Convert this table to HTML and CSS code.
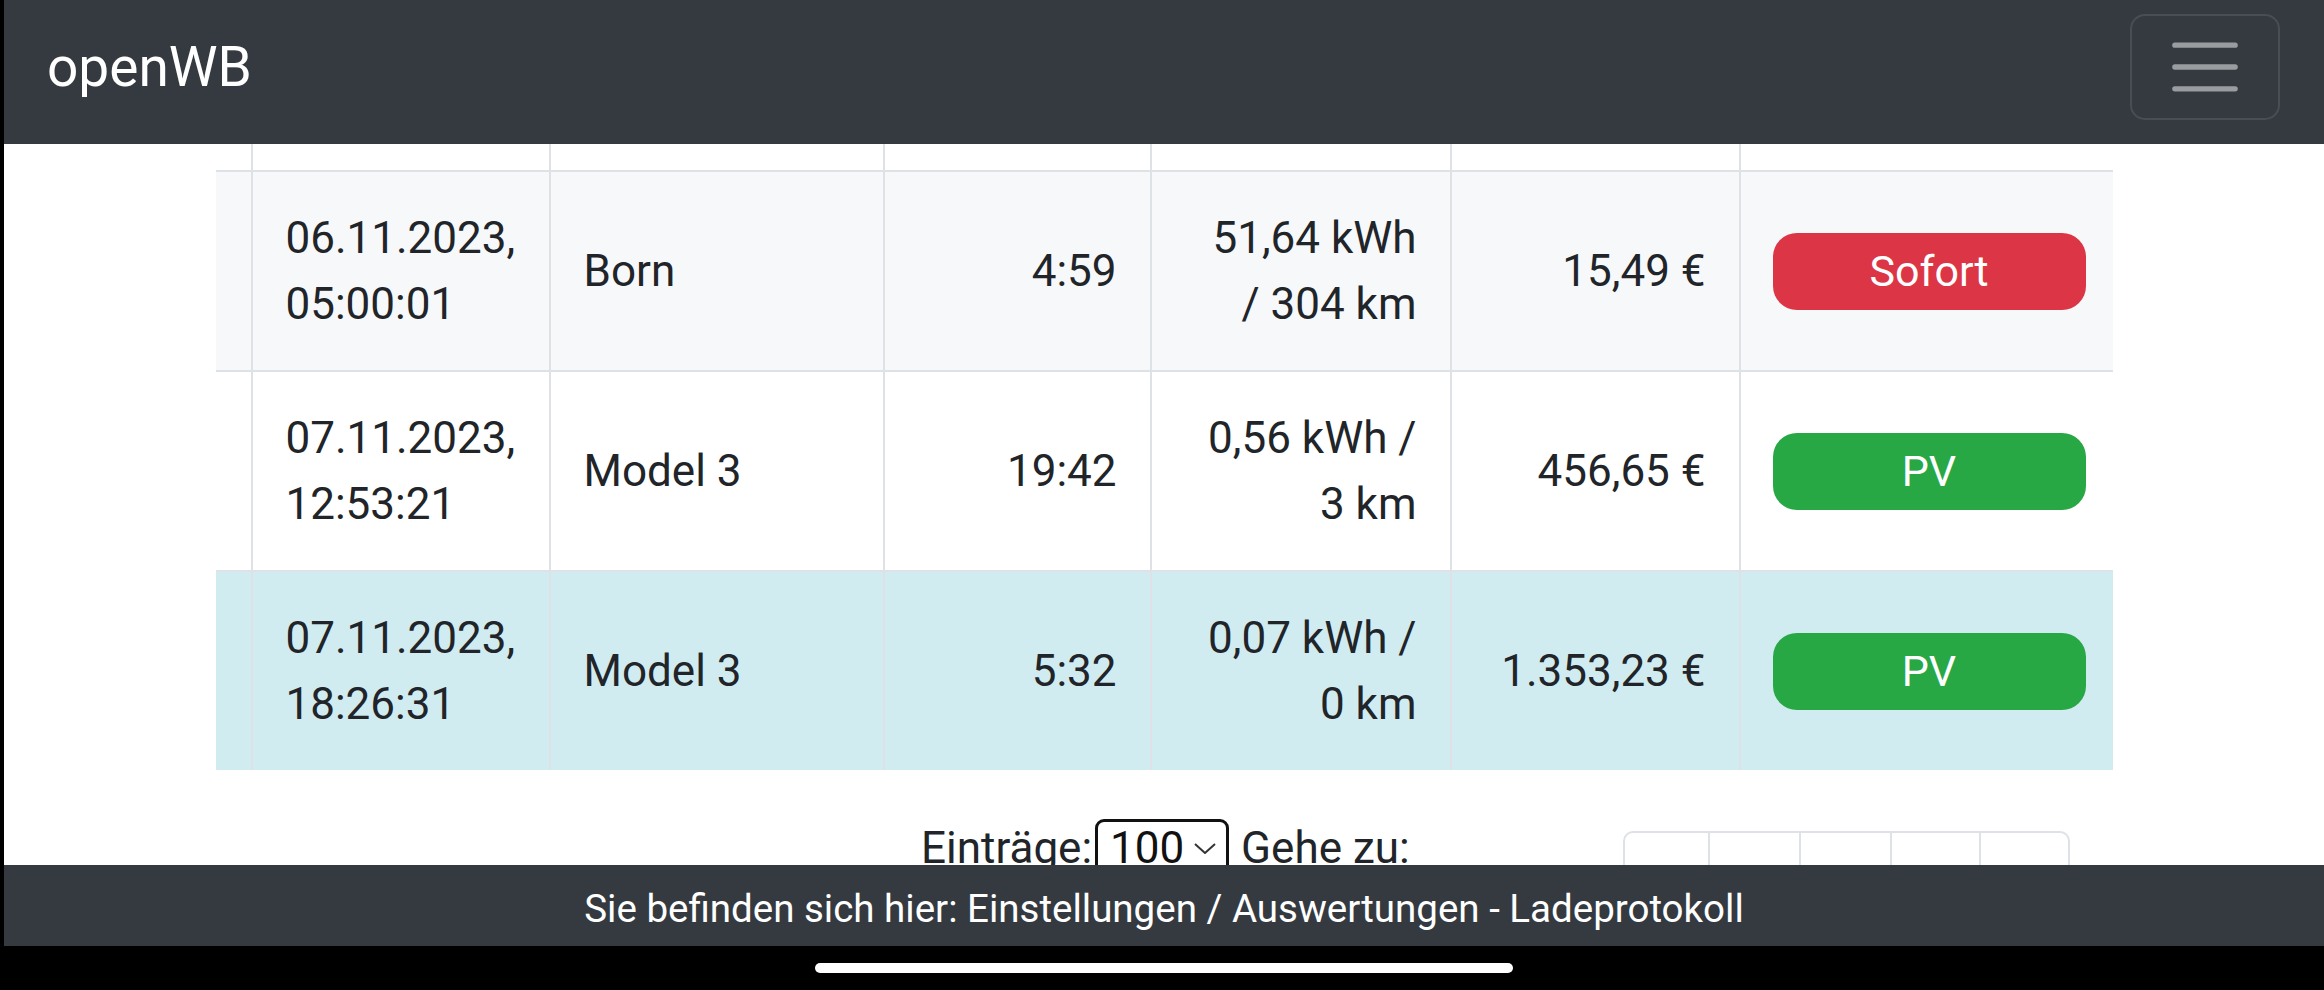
FILE: index.html
```html
<!DOCTYPE html>
<html lang="de">
<head>
<meta charset="utf-8">
<title>openWB - Ladeprotokoll</title>
<link rel="stylesheet" href="styles.css">
</head>
<body>
<div class="device">
  <header class="navbar">
    <span class="brand">openWB</span>
    <button class="toggler" type="button" aria-label="Menü">
      <svg class="toggler-icon" viewBox="0 0 30 30" width="82" height="82">
        <path d="M4 7h22M4 15h22M4 23h22" stroke="rgba(255,255,255,0.5)" stroke-width="2" stroke-linecap="round" fill="none"/>
      </svg>
    </button>
  </header>

  <main class="main">
    <div class="log-table">
      <div class="row row-partial">
        <div class="cell"></div>
        <div class="cell"></div>
        <div class="cell"></div>
        <div class="cell"></div>
        <div class="cell"></div>
        <div class="cell"></div>
        <div class="cell"></div>
      </div>
      <div class="row row-striped">
        <div class="cell"></div>
        <div class="cell">06.11.2023,<br>05:00:01</div>
        <div class="cell">Born</div>
        <div class="cell right">4:59</div>
        <div class="cell right">51,64 kWh<br>/ 304 km</div>
        <div class="cell right">15,49 €</div>
        <div class="cell badge-cell"><span class="badge badge-red">Sofort</span></div>
      </div>
      <div class="row">
        <div class="cell"></div>
        <div class="cell">07.11.2023,<br>12:53:21</div>
        <div class="cell">Model 3</div>
        <div class="cell right">19:42</div>
        <div class="cell right">0,56 kWh /<br>3 km</div>
        <div class="cell right">456,65 €</div>
        <div class="cell badge-cell"><span class="badge badge-green">PV</span></div>
      </div>
      <div class="row row-info">
        <div class="cell"></div>
        <div class="cell">07.11.2023,<br>18:26:31</div>
        <div class="cell">Model 3</div>
        <div class="cell right">5:32</div>
        <div class="cell right">0,07 kWh /<br>0 km</div>
        <div class="cell right">1.353,23 €</div>
        <div class="cell badge-cell"><span class="badge badge-green">PV</span></div>
      </div>
    </div>

    <div class="pager">
      <span class="pager-label">Einträge:</span>
      <span class="select">100<svg class="chevron" viewBox="0 0 22 11" width="22" height="11"><polyline points="1,1 11,10 21,1" fill="none" stroke="#333" stroke-width="2"/></svg></span>
      <span class="pager-label goto">Gehe zu:</span>
      <nav class="pagination" aria-label="Seiten">
        <span class="page p1"></span>
        <span class="page p2"></span>
        <span class="page p3"></span>
        <span class="page p4"></span>
        <span class="page p5"></span>
      </nav>
    </div>
  </main>

  <footer class="footer">Sie befinden sich hier: Einstellungen / Auswertungen - Ladeprotokoll</footer>

  <div class="homebar"><span class="home-indicator"></span></div>
</div>
</body>
</html>
```

FILE: styles.css
```css
* {
  box-sizing: border-box;
}

html, body {
  margin: 0;
  padding: 0;
  background: #000;
}

body {
  font-family: Roboto, "Noto Sans", "Liberation Sans", sans-serif;
  color: #212529;
}

.device {
  width: 2324px;
  height: 990px;
  padding-left: 4px;
  display: flex;
  flex-direction: column;
  background: #000;
  overflow: hidden;
}

/* ---------- header ---------- */
.navbar {
  height: 144px;
  flex: 0 0 144px;
  background: #343a40;
  display: flex;
  justify-content: space-between;
  align-items: flex-start;
  padding: 0 44px 0 43px;
}

.brand {
  color: #fff;
  font-size: 55px;
  line-height: 82px;
  margin-top: 26px;
}

.toggler {
  margin-top: 14px;
  width: 150px;
  height: 106px;
  background: transparent;
  border: 2px solid rgba(255, 255, 255, 0.1);
  border-radius: 15px;
  padding: 0;
  display: flex;
  align-items: center;
  justify-content: center;
}

.toggler-icon {
  display: block;
}

/* ---------- main ---------- */
.main {
  flex: 1 1 auto;
  background: #fff;
  overflow: hidden;
}

.log-table {
  width: 1897px;
  margin: 0 auto;
  font-size: 44px;
  line-height: 66px;
}

.row {
  display: grid;
  grid-template-columns: 35px 298px 334px 267px 300px 289px 374px;
  height: 200px;
  border-top: 2px solid #dee2e6;
}

.row-partial {
  height: 26px;
  border-top: none;
}

.row-striped {
  background: #f7f8fa;
}

.row-info {
  background: #d1ecf1;
}

.cell {
  border-left: 2px solid #dee2e6;
  padding: 0 33px;
  display: flex;
  align-items: center;
  white-space: nowrap;
}

.cell:first-child {
  border-left: none;
  padding: 0;
}

.cell.right {
  justify-content: flex-end;
  text-align: right;
}

.badge-cell {
  padding: 0 27px 0 32px;
}

.badge {
  width: 100%;
  height: 77px;
  border-radius: 24px;
  color: #fff;
  font-size: 43px;
  line-height: 1;
  display: flex;
  align-items: center;
  justify-content: center;
}

.badge-red {
  background: #dc3545;
}

.badge-green {
  background: #28a745;
}

/* ---------- pager ---------- */
.pager {
  display: flex;
  align-items: flex-start;
  margin-top: 45px;
  padding: 0 254px 0 917px;
  font-size: 44px;
  line-height: 66px;
  color: #212529;
}

.select {
  margin-top: 4px;
  margin-left: 3px;
  height: 90px;
  width: 134px;
  border: 3px solid #111;
  border-radius: 9px;
  padding: 0 10px 0 12px;
  display: flex;
  align-items: flex-start;
  justify-content: space-between;
  line-height: normal;
  color: #111;
}

.chevron {
  margin-top: 21px;
}

.goto {
  margin-left: 12px;
}

.pagination {
  margin-left: auto;
  margin-top: 16px;
  display: flex;
}

.page {
  height: 110px;
  border: 2px solid #dee2e6;
  border-left: none;
}

.p1 {
  width: 87px;
  border-left: 2px solid #dee2e6;
  border-radius: 10px 0 0 10px;
}

.p2, .p3 {
  width: 91px;
}

.p4 {
  width: 89px;
}

.p5 {
  width: 89px;
  border-radius: 0 10px 10px 0;
}

/* ---------- footer ---------- */
.footer {
  height: 81px;
  flex: 0 0 81px;
  background: #343a40;
  color: #fff;
  font-size: 38.5px;
  line-height: 1.5;
  display: flex;
  align-items: center;
  justify-content: center;
  padding-top: 6px;
}

.homebar {
  height: 44px;
  flex: 0 0 44px;
  background: #000;
  display: flex;
  justify-content: center;
  padding-top: 17px;
}

.home-indicator {
  width: 698px;
  height: 10px;
  border-radius: 5px;
  background: #fff;
}
```
